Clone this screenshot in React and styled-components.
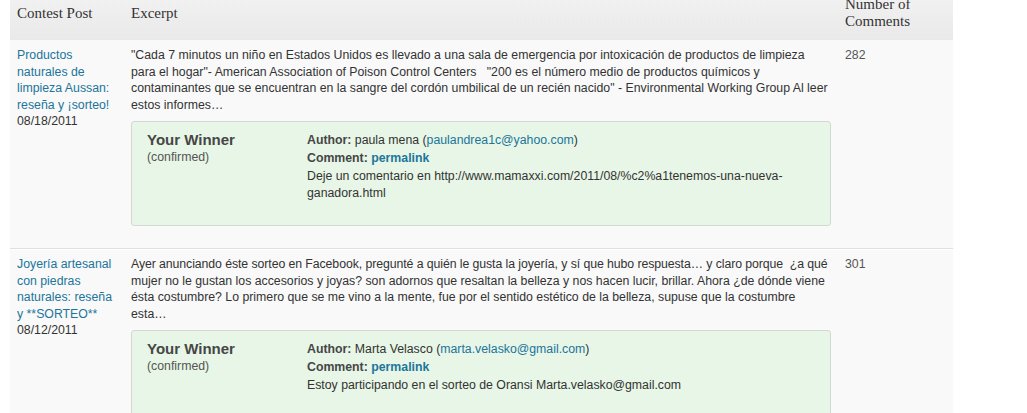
import styled, { createGlobalStyle } from "styled-components";

const GlobalStyle = createGlobalStyle`
    html, body {
        margin: 0;
        padding: 0;
        background: #fff;
        overflow: hidden;
    }
    body {
        font-family: "Liberation Sans", Arial, sans-serif;
        font-size: 12.3px;
        color: #333;
    }
`;

const contests = [
    {
        title: "Productos naturales de limpieza Aussan: reseña y ¡sorteo!",
        date: "08/18/2011",
        lead: "",
        excerpt:
            "\"Cada 7 minutos un niño en Estados Unidos es llevado a una sala de emergencia por intoxicación de productos de limpieza para el hogar\"- American Association of Poison Control Centers \u00a0\u00a0\"200 es el número medio de productos químicos y contaminantes que se encuentran en la sangre del cordón umbilical de un recién nacido\" - Environmental Working Group Al leer estos informes…",
        author: "paula mena",
        email: "paulandrea1c@yahoo.com",
        comment:
            "Deje un comentario en http://www.mamaxxi.com/2011/08/%c2%a1tenemos-una-nueva-ganadora.html",
        comments: 282,
    },
    {
        title: "Joyería artesanal con piedras naturales: reseña y **SORTEO**",
        date: "08/12/2011",
        lead: "Ayer anunciando éste sorteo en Facebook, pregunté a quién le gusta la joyería, y sí que hubo respuesta… y claro porque \u00a0¿a qué",
        excerpt:
            " mujer no le gustan los accesorios y joyas? son adornos que resaltan la belleza y nos hacen lucir, brillar. Ahora ¿de dónde viene ésta costumbre? Lo primero que se me vino a la mente, fue por el sentido estético de la belleza, supuse que la costumbre esta…",
        author: "Marta Velasco",
        email: "marta.velasko@gmail.com",
        comment: "Estoy participando en el sorteo de Oransi Marta.velasko@gmail.com",
        comments: 301,
    },
];

const Page = styled.div`
    padding-left: 10px;
    margin-top: -12px;
`;

const Table = styled.table`
    width: 943px;
    border-collapse: separate;
    border-spacing: 0;
    table-layout: fixed;
`;

const HeadCell = styled.th`
    box-sizing: border-box;
    width: ${(p) => p.$width}px;
    padding: 8px 7px 10px;
    text-align: left;
    vertical-align: middle;
    font-family: "Liberation Serif", Georgia, serif;
    font-weight: normal;
    font-size: 15px;
    line-height: 17px;
    color: #333;
    background: linear-gradient(to bottom, #f3f3f3, #e9e9e9);
`;

const Row = styled.tr`
    background: #f9f9f9;
`;

const Cell = styled.td`
    padding: 6px 7px 8px;
    vertical-align: top;
    line-height: 16.5px;
    border-top: 1px solid ${(p) => (p.$first ? "#f9f9f9" : "#fff")};
    border-bottom: 1px solid #dfdfdf;
    color: ${(p) => (p.$muted ? "#555" : "#333")};
`;

const Lead = styled.span`
    letter-spacing: -0.08px;
`;

const Link = styled.a`
    color: #21759b;
    text-decoration: none;
    font-weight: ${(p) => (p.$bold ? "bold" : "normal")};
`;

const PostDate = styled.div`
    color: #333;
`;

const Winner = styled.div`
    display: flex;
    margin: 8px 0 14px;
    padding: 9px 15px 24px;
    background: #e7f6e6;
    border: 1px solid #d3d8d3;
    border-radius: 3px;
`;

const WinnerLabel = styled.div`
    width: 160px;
    flex: none;
    color: #555;
`;

const WinnerTitle = styled.div`
    font-size: 15px;
    line-height: 18px;
    font-weight: bold;
    color: #464646;
`;

const WinnerDetails = styled.div`
    flex: 1;
    color: #333;
`;

const DetailLine = styled.div`
    line-height: 18px;
    margin-bottom: ${(p) => (p.$spaced ? "1px" : "0")};
`;

const Strong = styled.strong`
    color: #464646;
`;

const CommentText = styled.p`
    margin: 0;
    line-height: 16.5px;
`;

const App = () => {
    return (
        <Page>
            <GlobalStyle />
            <Table>
                <thead>
                    <tr>
                        <HeadCell $width={114}>Contest Post</HeadCell>
                        <HeadCell $width={714}>Excerpt</HeadCell>
                        <HeadCell $width={115}>
                            Number of
                            <br />
                            Comments
                        </HeadCell>
                    </tr>
                </thead>
                <tbody>
                    {contests.map((contest, index) => (
                        <Row key={`contest-${index}`}>
                            <Cell $first={index === 0}>
                                <Link href="#">{contest.title}</Link>
                                <PostDate>{contest.date}</PostDate>
                            </Cell>
                            <Cell $first={index === 0}>
                                {contest.lead && <Lead>{contest.lead}</Lead>}
                                {contest.excerpt}
                                <Winner>
                                    <WinnerLabel>
                                        <WinnerTitle>Your Winner</WinnerTitle>
                                        (confirmed)
                                    </WinnerLabel>
                                    <WinnerDetails>
                                        <DetailLine>
                                            <Strong>Author:</Strong> {contest.author} (
                                            <Link href="#">{contest.email}</Link>)
                                        </DetailLine>
                                        <DetailLine $spaced>
                                            <Strong>Comment:</Strong>{" "}
                                            <Link href="#" $bold>
                                                permalink
                                            </Link>
                                        </DetailLine>
                                        <CommentText>{contest.comment}</CommentText>
                                    </WinnerDetails>
                                </Winner>
                            </Cell>
                            <Cell $first={index === 0} $muted>
                                {contest.comments}
                            </Cell>
                        </Row>
                    ))}
                </tbody>
            </Table>
        </Page>
    );
};

export default App;
